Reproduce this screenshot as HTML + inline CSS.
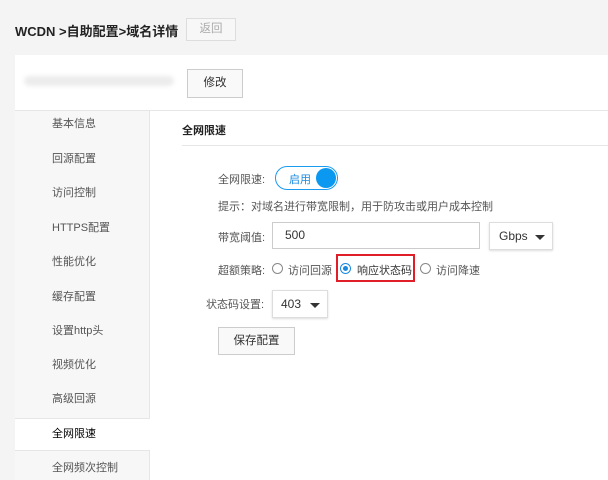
<!DOCTYPE html>
<html><head><meta charset="utf-8"><style>
*{box-sizing:border-box;margin:0;padding:0}
body{width:608px;height:480px;overflow:hidden;background:#f4f4f5;font-family:"Liberation Sans","Noto Sans CJK SC",sans-serif;font-size:11px;color:#333;position:relative}
.a{position:absolute}
.btn{position:absolute;border:1px solid #ccc;background:#f9f9f9;text-align:center;font-size:11.5px}
.si{position:absolute;left:52px;color:#555;font-size:11px}
.lbl{position:absolute;color:#555;font-size:11px}
.radio{position:absolute;width:11px;height:11px;border:1px solid #888;border-radius:50%;background:#fff}
.caret{position:absolute;width:0;height:0;border-left:5px solid transparent;border-right:5px solid transparent;border-top:5px solid #333}
</style></head><body>
<div class="a" style="left:15px;top:21px;font-size:13px;font-weight:bold;color:#222">WCDN &gt;自助配置&gt;域名详情</div>
<div class="btn" style="left:186px;top:18px;width:50px;height:23px;line-height:21px;color:#aaa;background:#f7f7f7;border-color:#ddd">返回</div>
<div class="a" style="left:15px;top:55px;width:593px;height:425px;background:#fff"></div>
<div class="a" style="left:24px;top:76px;width:150px;height:10px;background:#ececec;border-radius:5px;filter:blur(2px)"></div>
<div class="btn" style="left:187px;top:69px;width:56px;height:29px;line-height:27px;color:#333">修改</div>
<div class="a" style="left:15px;top:110px;width:593px;height:1px;background:#e6e6e6"></div>
<div class="a" style="left:15px;top:111px;width:135px;height:369px;background:#f7f7f7;border-right:1px solid #e6e6e6"></div>
<div class="a" style="left:15px;top:418px;width:135px;height:33px;background:#fff;border-top:1px solid #e6e6e6;border-bottom:1px solid #e6e6e6"></div>
<div class="si" style="top:115px">基本信息</div>
<div class="si" style="top:150px">回源配置</div>
<div class="si" style="top:184px">访问控制</div>
<div class="si" style="top:219px">HTTPS配置</div>
<div class="si" style="top:253px">性能优化</div>
<div class="si" style="top:288px">缓存配置</div>
<div class="si" style="top:322px">设置http头</div>
<div class="si" style="top:356px">视频优化</div>
<div class="si" style="top:390px">高级回源</div>
<div class="si" style="top:425px;color:#000">全网限速</div>
<div class="si" style="top:459px">全网频次控制</div>
<div class="a" style="left:182px;top:122px;font-weight:bold;color:#222">全网限速</div>
<div class="a" style="left:182px;top:145px;width:426px;height:1px;background:#e6e6e6"></div>
<div class="lbl" style="left:218px;top:171px">全网限速:</div>
<div class="a" style="left:275px;top:166px;width:63px;height:24px;border:1px solid #1a9bf0;border-radius:12px"></div>
<div class="a" style="left:289px;top:171px;color:#1a8ae0">启用</div>
<div class="a" style="left:316px;top:168px;width:20px;height:20px;border-radius:50%;background:#0a98f0"></div>
<div class="lbl" style="left:218px;top:198px">提示：对域名进行带宽限制，用于防攻击或用户成本控制</div>
<div class="lbl" style="left:218px;top:229px">带宽阈值:</div>
<div class="a" style="left:272px;top:222px;width:208px;height:27px;border:1px solid #ccc;padding-left:12px;line-height:25px;color:#333;font-size:12px">500</div>
<div class="a" style="left:489px;top:222px;width:64px;height:28px;border:1px solid #ddd;box-shadow:0 1px 2px #ddd;padding-left:9px;line-height:26px;color:#333;font-size:12px">Gbps</div>
<div class="caret" style="left:535px;top:235px"></div>
<div class="lbl" style="left:218px;top:262px">超额策略:</div>
<div class="radio" style="left:272px;top:263px"></div>
<div class="lbl" style="left:288px;top:262px">访问回源</div>
<div class="a" style="left:336px;top:254px;width:79px;height:28px;border:2px solid #e01e27"></div>
<div class="radio" style="left:340px;top:263px;border-color:#1a8ae0"></div>
<div class="a" style="left:343px;top:266px;width:5px;height:5px;border-radius:50%;background:#1a8ae0"></div>
<div class="lbl" style="left:357px;top:262px;color:#333">响应状态码</div>
<div class="radio" style="left:420px;top:263px"></div>
<div class="lbl" style="left:436px;top:262px">访问降速</div>
<div class="lbl" style="left:206px;top:296px">状态码设置:</div>
<div class="a" style="left:272px;top:290px;width:56px;height:28px;border:1px solid #ddd;box-shadow:0 1px 2px #ddd;padding-left:8px;line-height:26px;color:#333;font-size:12px">403</div>
<div class="caret" style="left:310px;top:303px"></div>
<div class="btn" style="left:218px;top:327px;width:77px;height:28px;line-height:26px;color:#333">保存配置</div>
</body></html>
